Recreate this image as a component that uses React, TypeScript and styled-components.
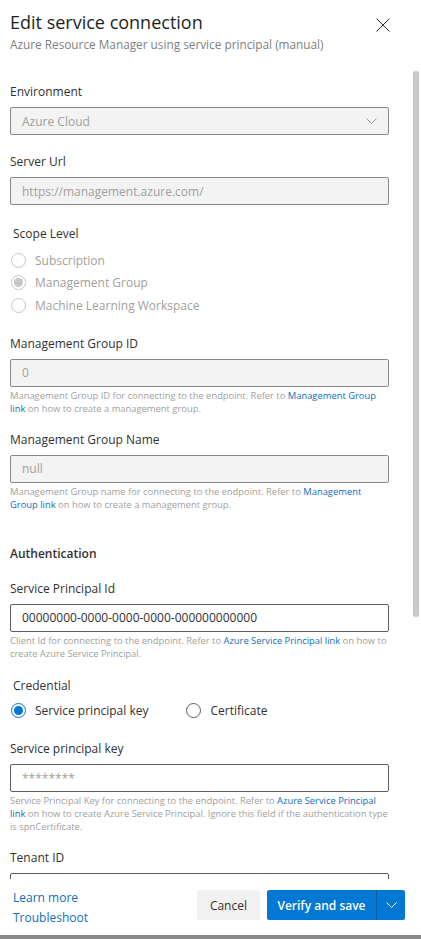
import React from "react";
import styled, { createGlobalStyle } from "styled-components";

const FONT = `"Segoe UI", "Open Sans", "Liberation Sans", sans-serif`;

const GlobalStyle = createGlobalStyle`
  html, body {
    margin: 0;
    padding: 0;
    background: #ffffff;
  }
  body {
    font-family: ${FONT};
    color: #323130;
  }
  * {
    box-sizing: border-box;
  }
`;

const Panel = styled.div`
  width: 421px;
  height: 939px;
  display: flex;
  flex-direction: column;
  background: #ffffff;
  overflow: hidden;
`;

const Header = styled.header`
  height: 60px;
  flex: none;
  display: flex;
  justify-content: space-between;
  align-items: flex-start;
  padding: 8px 30px 0 10px;
`;

const Titles = styled.div`
  display: flex;
  flex-direction: column;
`;

const Title = styled.h1`
  margin: 0;
  font-size: 18px;
  line-height: 28px;
  font-weight: 400;
  color: #201f1e;
`;

const Subtitle = styled.div`
  font-size: 11.8px;
  line-height: 16px;
  color: #7f7f7f;
`;

const CloseButton = styled.button`
  border: 0;
  background: transparent;
  padding: 0;
  margin-top: 9px;
  width: 16px;
  height: 16px;
  display: flex;
  align-items: center;
  justify-content: center;
  cursor: pointer;
`;

const Body = styled.div`
  flex: 1;
  position: relative;
  overflow: hidden;
  padding: 22px 32px 0 10px;
  display: flex;
  flex-direction: column;
`;

const ScrollThumb = styled.div`
  position: absolute;
  top: 11px;
  right: 2px;
  width: 6px;
  height: 546px;
  border-radius: 3px;
  background: #c8c8c8;
`;

const Field = styled.div<{ $top?: number }>`
  display: flex;
  flex-direction: column;
  margin-top: ${(p) => p.$top ?? 0}px;
`;

const Label = styled.label<{ $indent?: boolean }>`
  font-size: 12px;
  line-height: 20px;
  color: #323130;
  margin-bottom: 5px;
  padding-left: ${(p) => (p.$indent ? 3 : 0)}px;
`;

const SectionTitle = styled.div`
  font-size: 12px;
  line-height: 20px;
  font-weight: 600;
  color: #323130;
  margin-top: 33px;
`;

const InputBox = styled.div<{ $disabled?: boolean; $placeholder?: boolean }>`
  height: 28px;
  display: flex;
  align-items: center;
  justify-content: space-between;
  padding: 0 11px;
  border: 1px solid ${(p) => (p.$disabled ? "#8a8886" : "#605e5c")};
  border-radius: 2px;
  background: ${(p) => (p.$disabled ? "#f3f3f3" : "#ffffff")};
  font-size: 12px;
  color: ${(p) => (p.$disabled || p.$placeholder ? "#a19f9d" : "#323130")};
`;

const Helper = styled.div`
  margin-top: 2px;
  font-size: 9.4px;
  line-height: 13px;
  color: #a19f9d;
`;

const Link = styled.a`
  color: #106ebe;
  text-decoration: none;
  line-height: inherit;
`;

const RadioList = styled.div<{ $row?: boolean }>`
  display: flex;
  flex-direction: ${(p) => (p.$row ? "row" : "column")};
  gap: ${(p) => (p.$row ? 37 : 0)}px;
  margin-top: ${(p) => (p.$row ? -1 : 0)}px;
`;

const RadioItem = styled.div<{ $disabled?: boolean }>`
  display: flex;
  align-items: center;
  height: 22.5px;
  padding-left: 1px;
  font-size: 12px;
  color: ${(p) => (p.$disabled ? "#a19f9d" : "#323130")};
`;

const RadioCircle = styled.span<{ $checked?: boolean; $disabled?: boolean }>`
  width: 15px;
  height: 15px;
  border-radius: 50%;
  margin-right: 9px;
  flex: none;
  display: flex;
  align-items: center;
  justify-content: center;
  border: 1px solid
    ${(p) => (p.$disabled ? "#c8c6c4" : p.$checked ? "#0078d4" : "#605e5c")};
  background: #ffffff;

  &::after {
    content: "";
    display: ${(p) => (p.$checked ? "block" : "none")};
    width: 9px;
    height: 9px;
    border-radius: 50%;
    background: ${(p) => (p.$disabled ? "#c8c6c4" : "#0078d4")};
  }
`;

const Footer = styled.footer`
  height: 56px;
  flex: none;
  display: flex;
  align-items: center;
  justify-content: space-between;
  padding: 0 16px 0 13px;
  background: #ffffff;
`;

const FooterLinks = styled.div`
  display: flex;
  flex-direction: column;
  font-size: 12px;
  line-height: 20px;
  margin-top: 2px;
`;

const Buttons = styled.div`
  display: flex;
  gap: 7px;
  margin-top: -4px;
`;

const Button = styled.button`
  height: 30px;
  border: 0;
  border-radius: 2px;
  padding: 0 13px;
  font-family: ${FONT};
  font-size: 12px;
  font-weight: 400;
  color: #323130;
  background: #f1f1f1;
  cursor: pointer;
`;

const SplitButton = styled.div`
  display: flex;
  height: 30px;
  border-radius: 2px;
  overflow: hidden;
  background: #0078d4;
`;

const SplitMain = styled.button`
  width: 110px;
  border: 0;
  background: transparent;
  color: #ffffff;
  font-family: ${FONT};
  font-size: 12px;
  font-weight: 600;
  border-right: 1px solid #005a9e;
  cursor: pointer;
`;

const SplitToggle = styled.button`
  width: 28px;
  border: 0;
  background: transparent;
  display: flex;
  align-items: center;
  justify-content: center;
  cursor: pointer;
`;

const BottomBar = styled.div`
  height: 4px;
  flex: none;
  background: #8a8a8a;
`;

const Chevron = ({ color }: { color: string }) => (
  <svg width="11" height="6" viewBox="0 0 11 6" fill="none">
    <path d="M0.5 0.5 L5.5 5.5 L10.5 0.5" stroke={color} strokeWidth="1" />
  </svg>
);

type Radio = { label: string; checked?: boolean };

const scopes: Radio[] = [
  { label: "Subscription" },
  { label: "Management Group", checked: true },
  { label: "Machine Learning Workspace" },
];

const credentials: Radio[] = [
  { label: "Service principal key", checked: true },
  { label: "Certificate" },
];

export default function App() {
  return (
    <>
      <GlobalStyle />
      <Panel>
        <Header>
          <Titles>
            <Title>Edit service connection</Title>
            <Subtitle>Azure Resource Manager using service principal (manual)</Subtitle>
          </Titles>
          <CloseButton aria-label="Close">
            <svg width="14" height="14" viewBox="0 0 14 14">
              <path d="M0.5 0.5 L13.5 13.5 M13.5 0.5 L0.5 13.5" stroke="#323130" strokeWidth="1" />
            </svg>
          </CloseButton>
        </Header>

        <Body>
          <ScrollThumb />

          <Field>
            <Label>Environment</Label>
            <InputBox $disabled>
              Azure Cloud
              <Chevron color="#a19f9d" />
            </InputBox>
          </Field>

          <Field $top={17}>
            <Label>Server Url</Label>
            <InputBox $disabled>https://management.azure.com/</InputBox>
          </Field>

          <Field $top={19}>
            <Label $indent>Scope Level</Label>
            <RadioList>
              {scopes.map((r) => (
                <RadioItem key={r.label} $disabled>
                  <RadioCircle $checked={r.checked} $disabled />
                  {r.label}
                </RadioItem>
              ))}
            </RadioList>
          </Field>

          <Field $top={17}>
            <Label>Management Group ID</Label>
            <InputBox $disabled>0</InputBox>
            <Helper>
              Management Group ID for connecting to the endpoint. Refer to{" "}
              <Link>Management Group link</Link> on how to create a management group.
            </Helper>
          </Field>

          <Field $top={15}>
            <Label>Management Group Name</Label>
            <InputBox $disabled>null</InputBox>
            <Helper>
              Management Group name for connecting to the endpoint. Refer to{" "}
              <Link>Management Group link</Link> on how to create a management group.
            </Helper>
          </Field>

          <SectionTitle>Authentication</SectionTitle>

          <Field $top={15}>
            <Label>Service Principal Id</Label>
            <InputBox>00000000-0000-0000-0000-000000000000</InputBox>
            <Helper>
              Client Id for connecting to the endpoint. Refer to{" "}
              <Link>Azure Service Principal link</Link> on how to create Azure Service
              Principal.
            </Helper>
          </Field>

          <Field $top={16}>
            <Label $indent>Credential</Label>
            <RadioList $row>
              {credentials.map((r) => (
                <RadioItem key={r.label}>
                  <RadioCircle $checked={r.checked} />
                  {r.label}
                </RadioItem>
              ))}
            </RadioList>
          </Field>

          <Field $top={17}>
            <Label>Service principal key</Label>
            <InputBox $placeholder>********</InputBox>
            <Helper>
              Service Principal Key for connecting to the endpoint. Refer to{" "}
              <Link>Azure Service Principal link</Link> on how to create Azure Service
              Principal. Ignore this field if the authentication type is spnCertificate.
            </Helper>
          </Field>

          <Field $top={15}>
            <Label>Tenant ID</Label>
            <InputBox />
          </Field>
        </Body>

        <Footer>
          <FooterLinks>
            <Link>Learn more</Link>
            <Link>Troubleshoot</Link>
          </FooterLinks>
          <Buttons>
            <Button>Cancel</Button>
            <SplitButton>
              <SplitMain>Verify and save</SplitMain>
              <SplitToggle aria-label="More options">
                <Chevron color="#ffffff" />
              </SplitToggle>
            </SplitButton>
          </Buttons>
        </Footer>
        <BottomBar />
      </Panel>
    </>
  );
}
